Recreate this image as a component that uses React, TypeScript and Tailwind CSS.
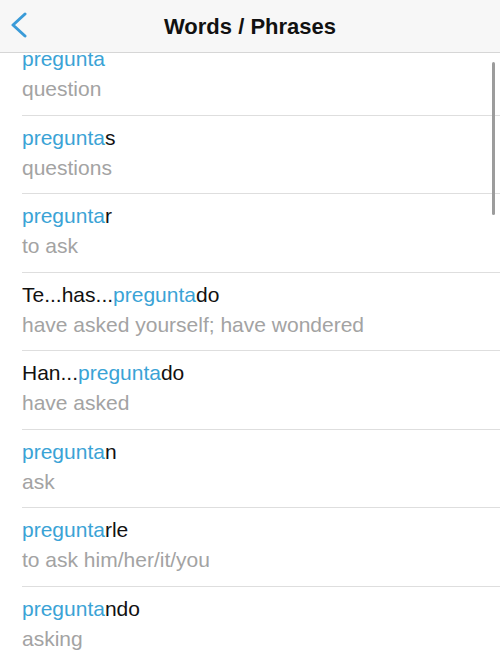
import React from 'react';

interface Entry {
  pre?: string;
  hit: string;
  post?: string;
  meaning: string;
}

const entries: Entry[] = [
  { hit: 'pregunta', meaning: 'question' },
  { hit: 'pregunta', post: 's', meaning: 'questions' },
  { hit: 'pregunta', post: 'r', meaning: 'to ask' },
  { pre: 'Te...has...', hit: 'pregunta', post: 'do', meaning: 'have asked yourself; have wondered' },
  { pre: 'Han...', hit: 'pregunta', post: 'do', meaning: 'have asked' },
  { hit: 'pregunta', post: 'n', meaning: 'ask' },
  { hit: 'pregunta', post: 'rle', meaning: 'to ask him/her/it/you' },
  { hit: 'pregunta', post: 'ndo', meaning: 'asking' },
];

const Row: React.FC<{ entry: Entry }> = ({ entry }) => (
  <div className="h-[78.5px] flex flex-col">
    <div className="pl-[22px] pt-[7px] flex-1">
      <div className="text-[21px] leading-[30px] text-[#111]">
        {entry.pre}
        <span className="text-[#3aa3d6]">{entry.hit}</span>
        {entry.post}
      </div>
      <div className="text-[21px] leading-[30px] text-[#a3a3a3]">{entry.meaning}</div>
    </div>
    <div className="ml-[22px] h-px bg-[#dedede]" />
  </div>
);

export default function App() {
  return (
    <div
      className="w-[500px] h-[655px] bg-white overflow-hidden relative flex flex-col"
      style={{ fontFamily: '"Liberation Sans", Arial, sans-serif' }}
    >
      <header className="h-[53px] shrink-0 bg-[#f7f7f7] border-b border-[#d6d6d6] flex items-center relative z-10">
        <button className="absolute left-[8px] top-[12px] w-[22px] h-[26px] flex items-center justify-center">
          <svg width="22" height="26" viewBox="0 0 22 26" fill="none">
            <path d="M17 2 L5 13 L17 24" stroke="#3a9bd8" strokeWidth="3" strokeLinecap="round" strokeLinejoin="round" />
          </svg>
        </button>
        <h1 className="flex-1 text-center text-[22px] font-bold text-[#111]">Words / Phrases</h1>
      </header>

      <div className="flex-1 overflow-hidden relative">
        <div className="mt-[-16px]">
          {entries.map((e, i) => (
            <Row key={i} entry={e} />
          ))}
        </div>
        <div className="absolute right-[5px] top-[9px] w-[3px] h-[153px] rounded-full bg-[#9c9c9c]" />
      </div>
    </div>
  );
}
